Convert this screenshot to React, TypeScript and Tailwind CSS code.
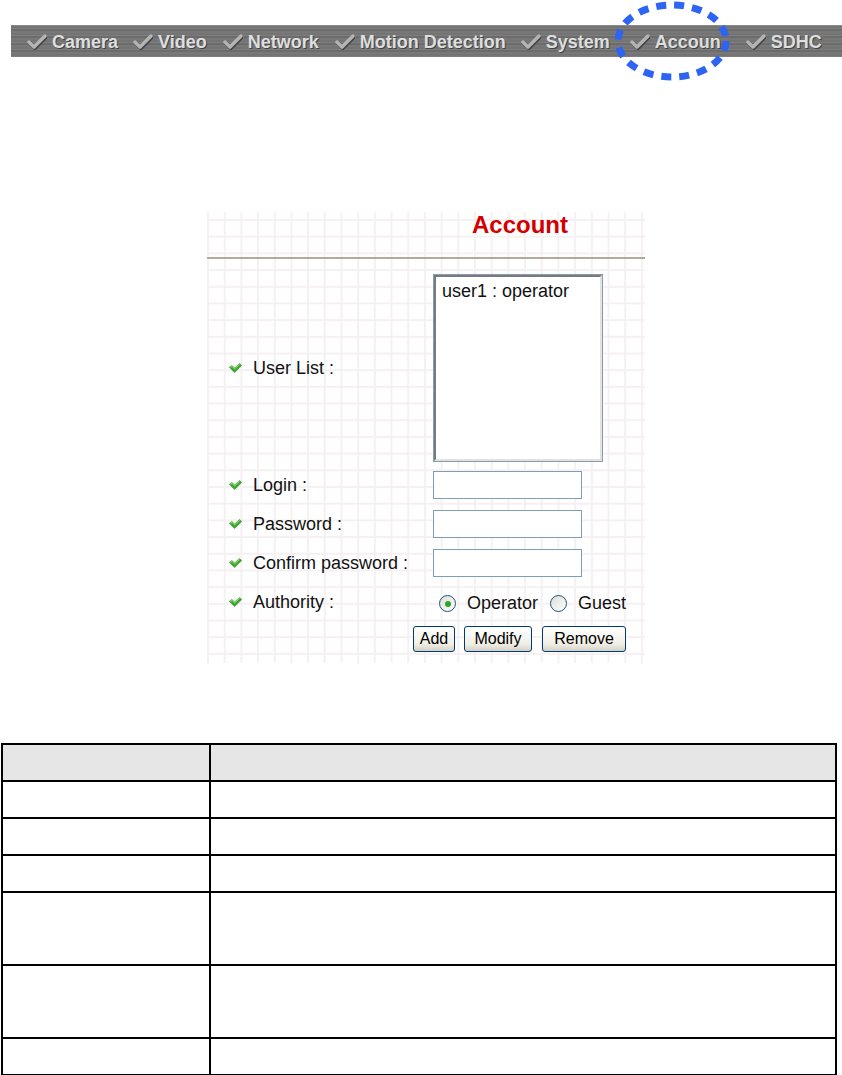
import React from 'react';

const menuItems = [
  { label: 'Camera', gap: 'ml-[16px]' },
  { label: 'Video', gap: 'ml-[15px]' },
  { label: 'Network', gap: 'ml-[16px]' },
  { label: 'Motion Detection', gap: 'ml-[16px]' },
  { label: 'System', gap: 'ml-[15px]' },
  { label: 'Accoun', gap: 'ml-[20px]' },
  { label: 'SDHC', gap: 'ml-[25px]' },
];

const tableRows = ['h-[37px]', 'h-[37px]', 'h-[37px]', 'h-[37px]', 'h-[73px]', 'h-[73px]', 'h-[37px]'];

function MenuCheck() {
  return (
    <svg width="20" height="16" viewBox="0 0 20 16" className="shrink-0">
      <path d="M2 8 L7 13 L18 2" fill="none" stroke="#454545" strokeWidth="4" strokeLinecap="round" strokeLinejoin="round" transform="translate(1 1)" />
      <path d="M2 8 L7 13 L18 2" fill="none" stroke="#b4b4b4" strokeWidth="3.5" strokeLinecap="round" strokeLinejoin="round" />
    </svg>
  );
}

function GreenCheck() {
  return (
    <svg width="13" height="10" viewBox="0 0 13 10" className="shrink-0">
      <path d="M0.3 4.2 L3 2.4 L5.6 5 L10.6 0.4 L12.7 2.6 L5.6 9.6 Z" fill="#3aa82a" stroke="#2a7f1c" strokeWidth="0.5" strokeLinejoin="round" />
      <path d="M1.4 4.3 L3 3.3 L5.6 5.9 L10.6 1.4" fill="none" stroke="#a6e68c" strokeWidth="0.9" />
    </svg>
  );
}

function Label({ text }: { text: string }) {
  return (
    <div className="w-[226px] shrink-0 flex items-center pl-[22px] gap-[11px]">
      <GreenCheck />
      <span>{text}</span>
    </div>
  );
}

function Radio({ checked }: { checked?: boolean }) {
  return (
    <div className="w-[17px] h-[17px] rounded-full border border-[#1c5180] bg-[linear-gradient(135deg,#dcdcd6,#ffffff)] flex items-center justify-center shrink-0">
      {checked && <div className="w-[6px] h-[6px] rounded-full bg-[#2aa52a]" />}
    </div>
  );
}

function XpButton({ text, width }: { text: string; width: string }) {
  return (
    <button
      type="button"
      className={`${width} h-[26px] rounded-[3px] border border-[#003c74] bg-[linear-gradient(to_bottom,#ffffff,#f1efe6_70%,#d6d0c5)] text-[16px] text-black leading-none`}
    >
      {text}
    </button>
  );
}

export default function App() {
  return (
    <div className="relative w-[842px] h-[1075px] bg-white font-['Liberation_Sans',Arial,sans-serif] overflow-hidden">
      {/* top menu bar */}
      <div className="mt-[25px] ml-[11px] h-[32px] flex items-center bg-[repeating-linear-gradient(to_bottom,#747474_0px,#747474_2px,#7e7e7e_2px,#7e7e7e_3px,#6c6c6c_3px,#6c6c6c_5px,#787878_5px,#787878_7px)] border-t border-[#8a8a8a]">
        {menuItems.map((item) => (
          <div key={item.label} className={`flex items-center gap-[5px] ${item.gap}`}>
            <MenuCheck />
            <span className="text-[18px] font-bold text-[#dedede] leading-none whitespace-nowrap [text-shadow:1px_1px_0_#444]">
              {item.label}
            </span>
          </div>
        ))}
      </div>

      {/* dotted highlight */}
      <svg className="absolute left-[612px] top-0" width="122" height="84" viewBox="0 0 122 84">
        <ellipse cx="60" cy="41" rx="54" ry="36" fill="none" stroke="#2d64f4" strokeWidth="7" strokeDasharray="10 8" />
      </svg>

      {/* account panel */}
      <div className="mt-[155px] ml-[207px] w-[438px] h-[451px] text-[18px] text-[#111] bg-white bg-[linear-gradient(to_right,#f5f0f2_2px,transparent_2px),linear-gradient(to_bottom,#f5f0f2_2px,transparent_2px)] bg-[size:16.7px_16.7px] bg-[position:0px_7px]">
        <div className="h-[45px] pl-[265px] text-[24px] leading-[26px] font-bold text-[#d40000]">Account</div>
        <div className="h-[2px] bg-[#b3ab98]" />

        <div className="mt-[15px] flex items-center">
          <Label text="User List :" />
          <div className="w-[170px] h-[188px] border border-[#7f9db9] bg-white">
            <div className="h-full border-2 border-t-[#7a7a7a] border-l-[#7a7a7a] border-r-[#e4e2da] border-b-[#e4e2da] pl-[6px] pt-[3px] leading-[22px]">
              user1 : operator
            </div>
          </div>
        </div>

        <div className="mt-[9px] flex items-center">
          <Label text="Login :" />
          <input className="w-[149px] h-[28px] border border-[#7f9db9] bg-white outline-none" readOnly />
        </div>
        <div className="mt-[11px] flex items-center">
          <Label text="Password :" />
          <input className="w-[149px] h-[28px] border border-[#7f9db9] bg-white outline-none" readOnly />
        </div>
        <div className="mt-[11px] flex items-center">
          <Label text="Confirm password :" />
          <input className="w-[149px] h-[28px] border border-[#7f9db9] bg-white outline-none" readOnly />
        </div>

        <div className="mt-[13px] h-[24px] flex items-center">
          <Label text="Authority :" />
          <div className="flex items-center pl-[6px] pt-[3px]">
            <Radio checked />
            <span className="ml-[11px]">Operator</span>
            <div className="ml-[12px]">
              <Radio />
            </div>
            <span className="ml-[11px]">Guest</span>
          </div>
        </div>

        <div className="mt-[11px] pl-[206px] flex items-center gap-[9px]">
          <XpButton text="Add" width="w-[42px]" />
          <XpButton text="Modify" width="w-[68px]" />
          <div className="ml-px">
            <XpButton text="Remove" width="w-[84px]" />
          </div>
        </div>
      </div>

      {/* description table */}
      <table className="mt-[80px] ml-px w-[836px] border-collapse">
        <tbody>
          {tableRows.map((h, i) => (
            <tr key={i} className={h}>
              <td className={`w-[208px] border-2 border-black ${i === 0 ? 'bg-[#e6e6e6]' : ''}`} />
              <td className={`border-2 border-black ${i === 0 ? 'bg-[#e6e6e6]' : ''}`} />
            </tr>
          ))}
        </tbody>
      </table>
    </div>
  );
}
